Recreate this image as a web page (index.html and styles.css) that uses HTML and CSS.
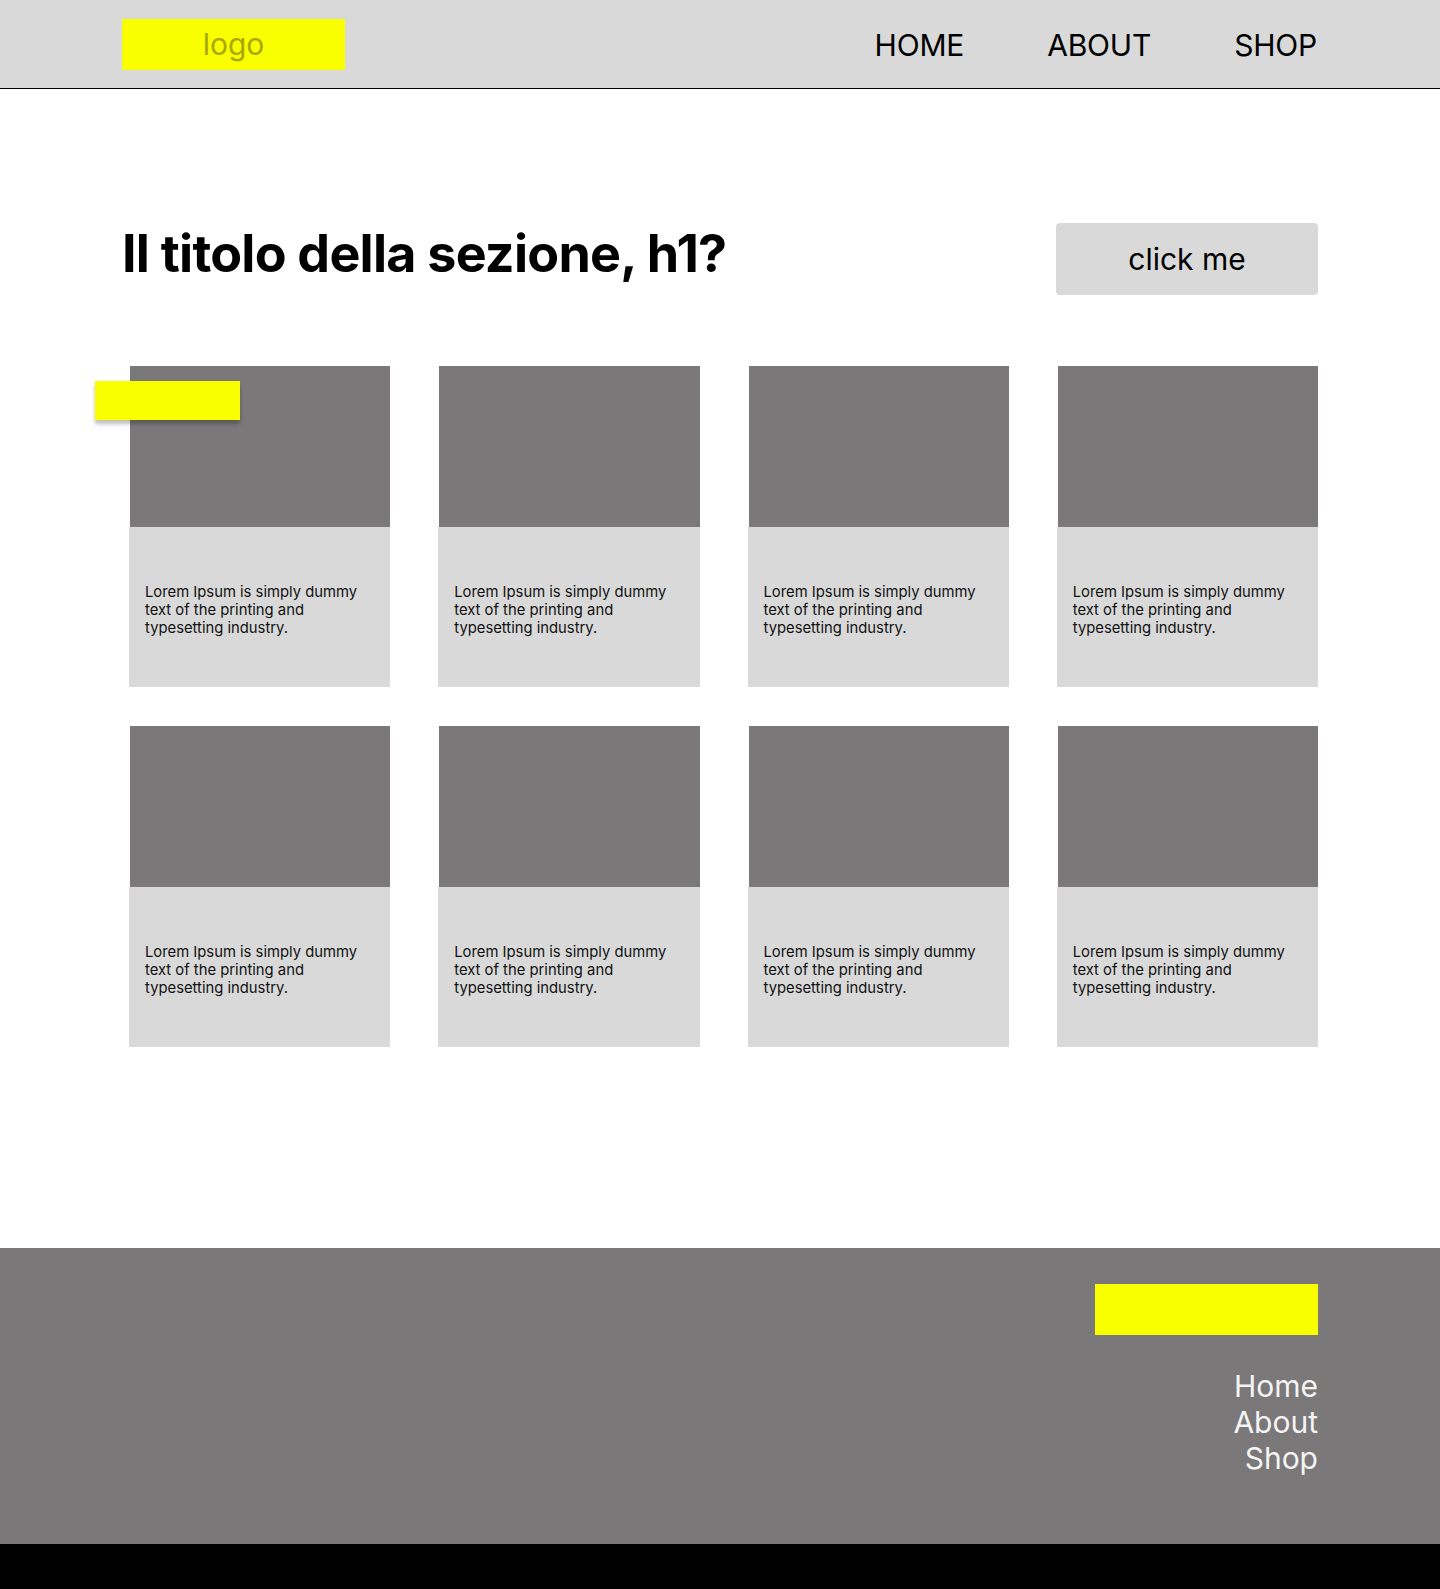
FILE: index.html
```html
<!DOCTYPE html>
<html lang="it">
<head>
<meta charset="utf-8">
<title>Wireframe</title>
<link rel="stylesheet" href="styles.css">
</head>
<body>
<header class="site-header">
  <div class="logo">logo</div>
  <nav class="main-nav">
    <a href="#">HOME</a>
    <a href="#">ABOUT</a>
    <a href="#">SHOP</a>
  </nav>
</header>
<main class="content">
  <div class="title-row">
    <h1 class="section-title">Il titolo della sezione, h1?</h1>
    <button class="cta">click me</button>
  </div>
  <div class="card-grid">
    <article class="card">
      <span class="badge"></span>
      <div class="card-image"></div>
      <div class="card-body"><p>Lorem Ipsum is simply dummy text of the printing and typesetting industry.</p></div>
    </article>
    <article class="card">
      <div class="card-image"></div>
      <div class="card-body"><p>Lorem Ipsum is simply dummy text of the printing and typesetting industry.</p></div>
    </article>
    <article class="card">
      <div class="card-image"></div>
      <div class="card-body"><p>Lorem Ipsum is simply dummy text of the printing and typesetting industry.</p></div>
    </article>
    <article class="card">
      <div class="card-image"></div>
      <div class="card-body"><p>Lorem Ipsum is simply dummy text of the printing and typesetting industry.</p></div>
    </article>
    <article class="card">
      <div class="card-image"></div>
      <div class="card-body"><p>Lorem Ipsum is simply dummy text of the printing and typesetting industry.</p></div>
    </article>
    <article class="card">
      <div class="card-image"></div>
      <div class="card-body"><p>Lorem Ipsum is simply dummy text of the printing and typesetting industry.</p></div>
    </article>
    <article class="card">
      <div class="card-image"></div>
      <div class="card-body"><p>Lorem Ipsum is simply dummy text of the printing and typesetting industry.</p></div>
    </article>
    <article class="card">
      <div class="card-image"></div>
      <div class="card-body"><p>Lorem Ipsum is simply dummy text of the printing and typesetting industry.</p></div>
    </article>
  </div>
</main>
<footer class="site-footer">
  <div class="footer-logo"></div>
  <nav class="footer-nav">
    <a href="#">Home</a>
    <a href="#">About</a>
    <a href="#">Shop</a>
  </nav>
</footer>
<div class="bottom-bar"></div>
</body>
</html>
```

FILE: styles.css
```css
* {
  box-sizing: border-box;
}

body {
  margin: 0;
  font-family: Inter, "Noto Sans", sans-serif;
  background: #ffffff;
  color: #000;
}

a {
  color: inherit;
  text-decoration: none;
}

.site-header {
  height: 89px;
  background: #d9d9d9;
  border-bottom: 1px solid #000;
  padding: 0 123px 0 122px;
  display: flex;
  align-items: center;
  justify-content: space-between;
}

.logo {
  width: 223px;
  height: 51px;
  margin-top: 1px;
  background: #faff00;
  color: #a9a800;
  font-size: 30px;
  display: flex;
  align-items: center;
  justify-content: center;
  padding-bottom: 2px;
}

.main-nav {
  display: flex;
  gap: 83px;
  padding-top: 2px;
}

.main-nav a {
  font-size: 30px;
  color: #000;
  letter-spacing: -0.2px;
}

.content {
  padding: 130px 122px 201px 122px;
}

.title-row {
  display: flex;
  justify-content: space-between;
  align-items: flex-start;
}

.section-title {
  margin: 2px 0 0 0;
  font-size: 52px;
  font-weight: 700;
  line-height: 65px;
  letter-spacing: -0.75px;
}

.cta {
  margin-top: 4px;
  width: 262px;
  height: 72px;
  border: none;
  border-radius: 4px;
  background: #d9d9d9;
  color: #000;
  font-family: Inter, "Noto Sans", sans-serif;
  font-size: 30px;
  padding: 0;
}

.card-grid {
  margin: 71px 0 0 7px;
  display: grid;
  grid-template-columns: repeat(4, 1fr);
  column-gap: 48px;
  row-gap: 39px;
}

.card {
  position: relative;
  height: 321px;
  display: flex;
  flex-direction: column;
}

.card-image {
  height: 161px;
  margin-left: 1px;
  background: #7a7879;
}

.card-body {
  flex: 1;
  background: #d9d9d9;
  display: flex;
  align-items: center;
  padding: 6px 16px 0 16px;
}

.card-body p {
  margin: 0;
  font-size: 14.8px;
  line-height: 18px;
  color: #111;
}

.badge {
  position: absolute;
  left: -34px;
  top: 15px;
  width: 145px;
  height: 39px;
  background: #faff00;
  box-shadow: 0 4px 4px rgba(0, 0, 0, 0.25);
}

.site-footer {
  height: 296px;
  background: #7a7879;
  padding: 36px 122px 0 122px;
  display: flex;
  flex-direction: column;
  align-items: flex-end;
}

.footer-logo {
  width: 223px;
  height: 51px;
  background: #faff00;
}

.footer-nav {
  margin-top: 33px;
  display: flex;
  flex-direction: column;
  align-items: flex-end;
}

.footer-nav a {
  font-size: 30px;
  line-height: 36px;
  color: #f4f4f4;
}

.bottom-bar {
  height: 45px;
  background: #000;
}
```
